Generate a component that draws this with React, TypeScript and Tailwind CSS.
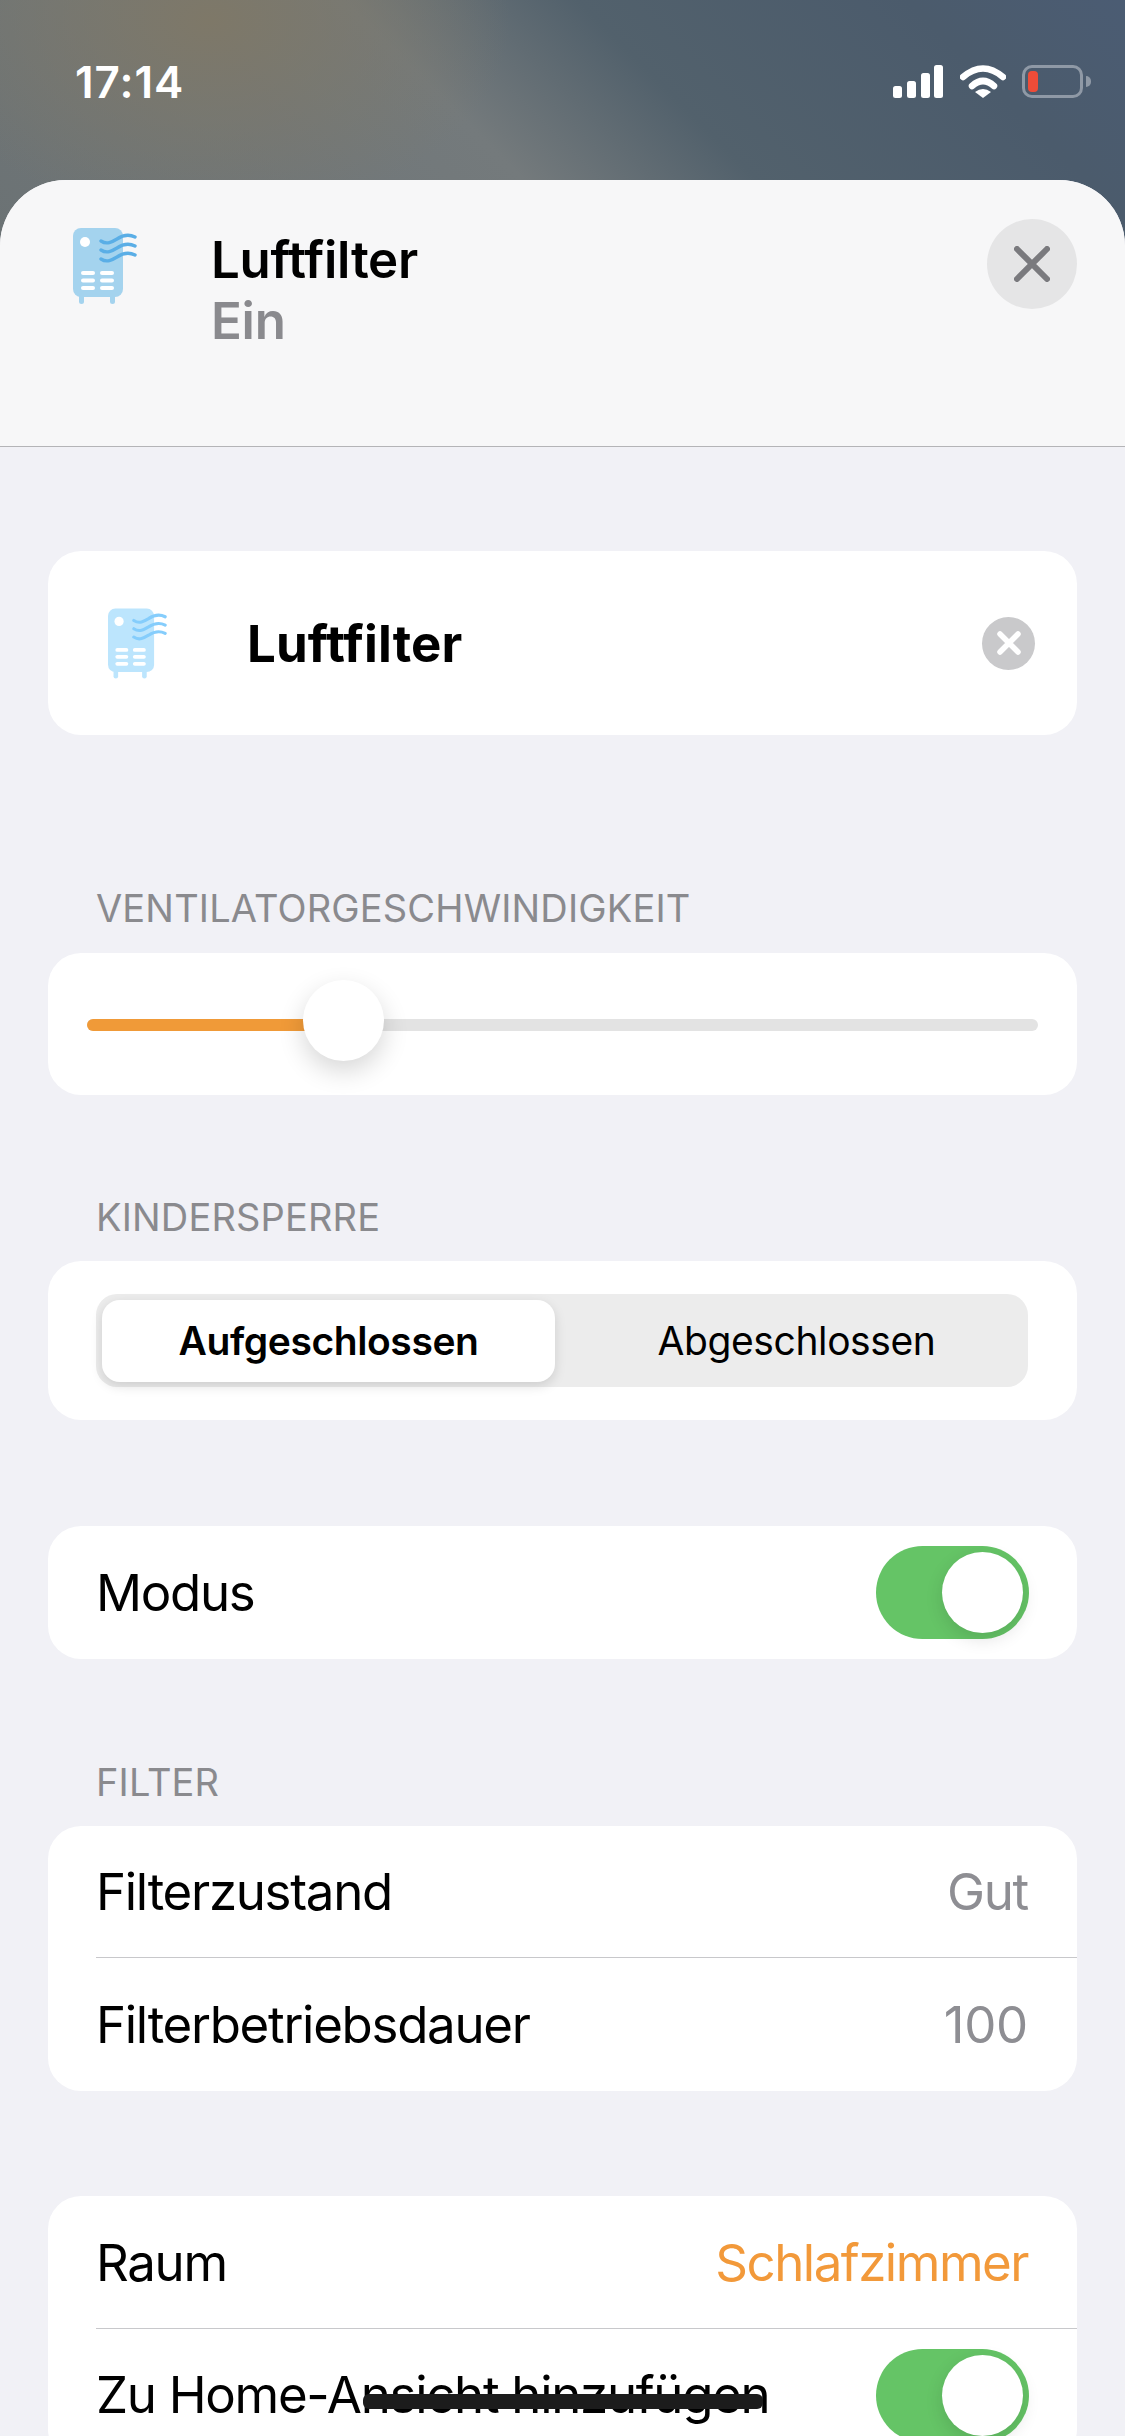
import React from 'react';

function PurifierIcon({ body, wave, className }: { body: string; wave: string; className: string }) {
  const pills = [43, 50.5, 58];
  return (
    <svg viewBox="0 0 64 76" className={className}>
      <rect x="6" y="64" width="5" height="12" rx="2.5" fill={body} />
      <rect x="37" y="64" width="5" height="12" rx="2.5" fill={body} />
      <rect x="0" y="0" width="50" height="69" rx="8" fill={body} />
      <circle cx="12" cy="14" r="5" fill="#fff" />
      {pills.map((y) => (
        <g key={y} fill="#fff">
          <rect x="8" y={y} width="14" height="4" rx="2" />
          <rect x="27" y={y} width="14" height="4" rx="2" />
        </g>
      ))}
      {[0, 9, 18].map((dy) => (
        <path
          key={dy}
          d={`M28 ${13 + dy} C34 ${17 + dy} 39 ${14 + dy} 44 ${11 + dy} C50 ${7 + dy} 56 ${6 + dy} 62 ${9 + dy}`}
          fill="none"
          stroke={wave}
          strokeWidth="3.4"
          strokeLinecap="round"
        />
      ))}
    </svg>
  );
}

function StatusIcons() {
  return (
    <div className="flex items-center">
      <svg viewBox="0 0 50 33" className="w-[50px] h-[33px]" fill="#fff">
        <rect x="0" y="21" width="9" height="12" rx="2.5" />
        <rect x="14" y="16" width="9" height="17" rx="2.5" />
        <rect x="28" y="8" width="9" height="25" rx="2.5" />
        <rect x="41" y="0" width="9" height="33" rx="2.5" />
      </svg>
      <svg viewBox="0 0 46 33" className="w-[46px] h-[33px] ml-[17px]">
        <path d="M3 12 Q23 -5 43 12" fill="none" stroke="#fff" strokeWidth="6.5" strokeLinecap="round" />
        <path d="M12 21 Q23 11 34 21" fill="none" stroke="#fff" strokeWidth="6.5" strokeLinecap="round" />
        <path d="M15 27 Q23 21 31 27 L23 33 Z" fill="#fff" />
      </svg>
      <div className="flex items-center ml-[16px]">
        <div className="w-[61px] h-[33px] rounded-[10px] border-[3px] border-[#8f99a6] p-[3px]">
          <div className="w-[10px] h-full rounded-[4px] bg-[#ee4c38]" />
        </div>
        <div className="w-[5px] h-[11px] ml-[3px] rounded-r-full bg-[#8f99a6]" />
      </div>
    </div>
  );
}

function Toggle() {
  return (
    <div className="w-[153px] h-[93px] rounded-full bg-[#65c466] flex items-center justify-end pr-[6px]">
      <div className="w-[81px] h-[81px] rounded-full bg-white shadow-[0_6px_18px_rgba(0,0,0,0.12)]" />
    </div>
  );
}

function SectionLabel({ children, className }: { children: string; className: string }) {
  return <div className={`h-[46px] leading-[46px] pl-[96px] text-[38px] tracking-[0.15px] text-[#8a8a8e] ${className}`}>{children}</div>;
}

function Divider() {
  return <div className="h-px ml-[48px] bg-[#c8c8cb]" />;
}

function Row({ label, value, valueClass, heightClass }: { label: string; value: string; valueClass: string; heightClass: string }) {
  return (
    <div className={`${heightClass} pt-[2px] flex items-center justify-between pl-[48px] pr-[49px] text-[51px] tracking-[-1.3px]`}>
      <span className="text-black">{label}</span>
      <span className={valueClass}>{value}</span>
    </div>
  );
}

function App() {
  return (
    <div className="h-[2436px] overflow-hidden font-['Inter',sans-serif] bg-no-repeat bg-[#f1f1f6] bg-[length:100%_320px] bg-[radial-gradient(ellipse_300px_200px_at_210px_20px,#7e7868,transparent),linear-gradient(45deg,#6a7173_0%,#747a7c_46%,#52616c_62%,#4b5b6c_85%,#4b5c73_100%)]">
      <div className="h-[180px] pl-[75px] pr-[34px] pt-[59px] flex items-start justify-between">
        <span className="text-[44px] leading-[46px] font-semibold tracking-[1px] text-white">17:14</span>
        <div className="pt-[6px]">
          <StatusIcons />
        </div>
      </div>

      <div className="rounded-t-[66px] overflow-hidden bg-[#f1f1f6]">
        <div className="h-[267px] bg-[#f7f7f8] border-b border-[#b4b4b7] flex items-start pl-[73px] pr-[48px]">
          <PurifierIcon body="#a4d3ee" wave="#5aaee6" className="w-[64px] h-[76px] mt-[48px]" />
          <div className="ml-[74px] mt-[49px] flex-1 text-[51px] leading-[61px] font-semibold tracking-[-0.3px]">
            <div className="text-black">Luftfilter</div>
            <div className="text-[#8a8a8e]">Ein</div>
          </div>
          <div className="mt-[39px] w-[90px] h-[90px] rounded-full bg-[#e5e5e6] flex items-center justify-center">
            <svg viewBox="0 0 36 36" className="w-[36px] h-[36px]">
              <path d="M3 3 L33 33 M33 3 L3 33" stroke="#7a7a7e" strokeWidth="6" strokeLinecap="round" />
            </svg>
          </div>
        </div>

        <div className="px-[48px] pt-[104px]">
          <div className="h-[184px] rounded-[33px] bg-white flex items-center pl-[60px] pr-[42px]">
            <PurifierIcon body="#bce5fd" wave="#85cdfc" className="w-[59px] h-[71px]" />
            <span className="ml-[80px] pt-[2px] flex-1 text-[51px] font-bold tracking-[0.1px] text-black">Luftfilter</span>
            <div className="w-[53px] h-[53px] rounded-full bg-[#c9c9cb] flex items-center justify-center">
              <svg viewBox="0 0 24 24" className="w-[24px] h-[24px]">
                <path d="M3 3 L21 21 M21 3 L3 21" stroke="#fff" strokeWidth="5.5" strokeLinecap="round" />
              </svg>
            </div>
          </div>
        </div>

        <SectionLabel className="mt-[150px] mb-[22px]">VENTILATORGESCHWINDIGKEIT</SectionLabel>
        <div className="px-[48px]">
          <div className="h-[142px] rounded-[33px] bg-white flex items-center px-[39px] pt-[2px]">
            <div className="relative flex-1 h-[12px] rounded-full bg-[#e3e3e3]">
              <div className="w-[230px] h-full rounded-l-full bg-[#f09a38]" />
              <div className="absolute left-[216px] top-[-39px] w-[81px] h-[81px] rounded-full bg-white shadow-[0_10px_26px_rgba(0,0,0,0.16)]" />
            </div>
          </div>
        </div>

        <SectionLabel className="mt-[99px] mb-[21px]">KINDERSPERRE</SectionLabel>
        <div className="px-[48px]">
          <div className="h-[159px] rounded-[33px] bg-white pl-[48px] pr-[49px] pt-[33px]">
            <div className="h-[93px] rounded-[21px] bg-[#ececec] flex pl-[6px] pt-[6px] text-[39px]">
              <div className="w-[453px] h-[82px] rounded-[18px] bg-white shadow-[0_4px_12px_rgba(0,0,0,0.13)] flex items-center justify-center font-[560] text-black tracking-[-0.4px]">
                Aufgeschlossen
              </div>
              <div className="flex-1 h-[82px] pl-[10px] flex items-center justify-center font-normal text-black tracking-[-0.4px]">
                Abgeschlossen
              </div>
            </div>
          </div>
        </div>

        <div className="px-[48px] pt-[106px]">
          <div className="h-[133px] rounded-[33px] bg-white flex items-center justify-between pl-[48px] pr-[48px] text-[51px] tracking-[-1.3px] text-black">
            <span className="pt-[2px]">Modus</span>
            <Toggle />
          </div>
        </div>

        <SectionLabel className="mt-[100px] mb-[21px]">FILTER</SectionLabel>
        <div className="px-[48px]">
          <div className="rounded-[33px] bg-white">
            <Row label="Filterzustand" value="Gut" valueClass="text-[#8e8e93]" heightClass="h-[131px]" />
            <Divider />
            <Row label="Filterbetriebsdauer" value="100" valueClass="text-[#8e8e93] tracking-[-0.3px]" heightClass="h-[133px]" />
          </div>
        </div>

        <div className="px-[48px] pt-[105px]">
          <div className="rounded-[33px] bg-white">
            <Row label="Raum" value="Schlafzimmer" valueClass="text-[#f2993a] tracking-[-1.5px]" heightClass="h-[132px]" />
            <Divider />
            <div className="h-[133px] flex items-center justify-between pl-[48px] pr-[48px] text-[51px] tracking-[-1.3px] text-black">
              <span className="relative">
                Zu Home-Ansicht hinzufügen
                <span className="absolute left-[267px] top-[37px] w-[400px] h-[15px] rounded-[6px] bg-[#1c1c1c]" />
              </span>
              <Toggle />
            </div>
          </div>
        </div>
      </div>
    </div>
  );
}

export default App;
